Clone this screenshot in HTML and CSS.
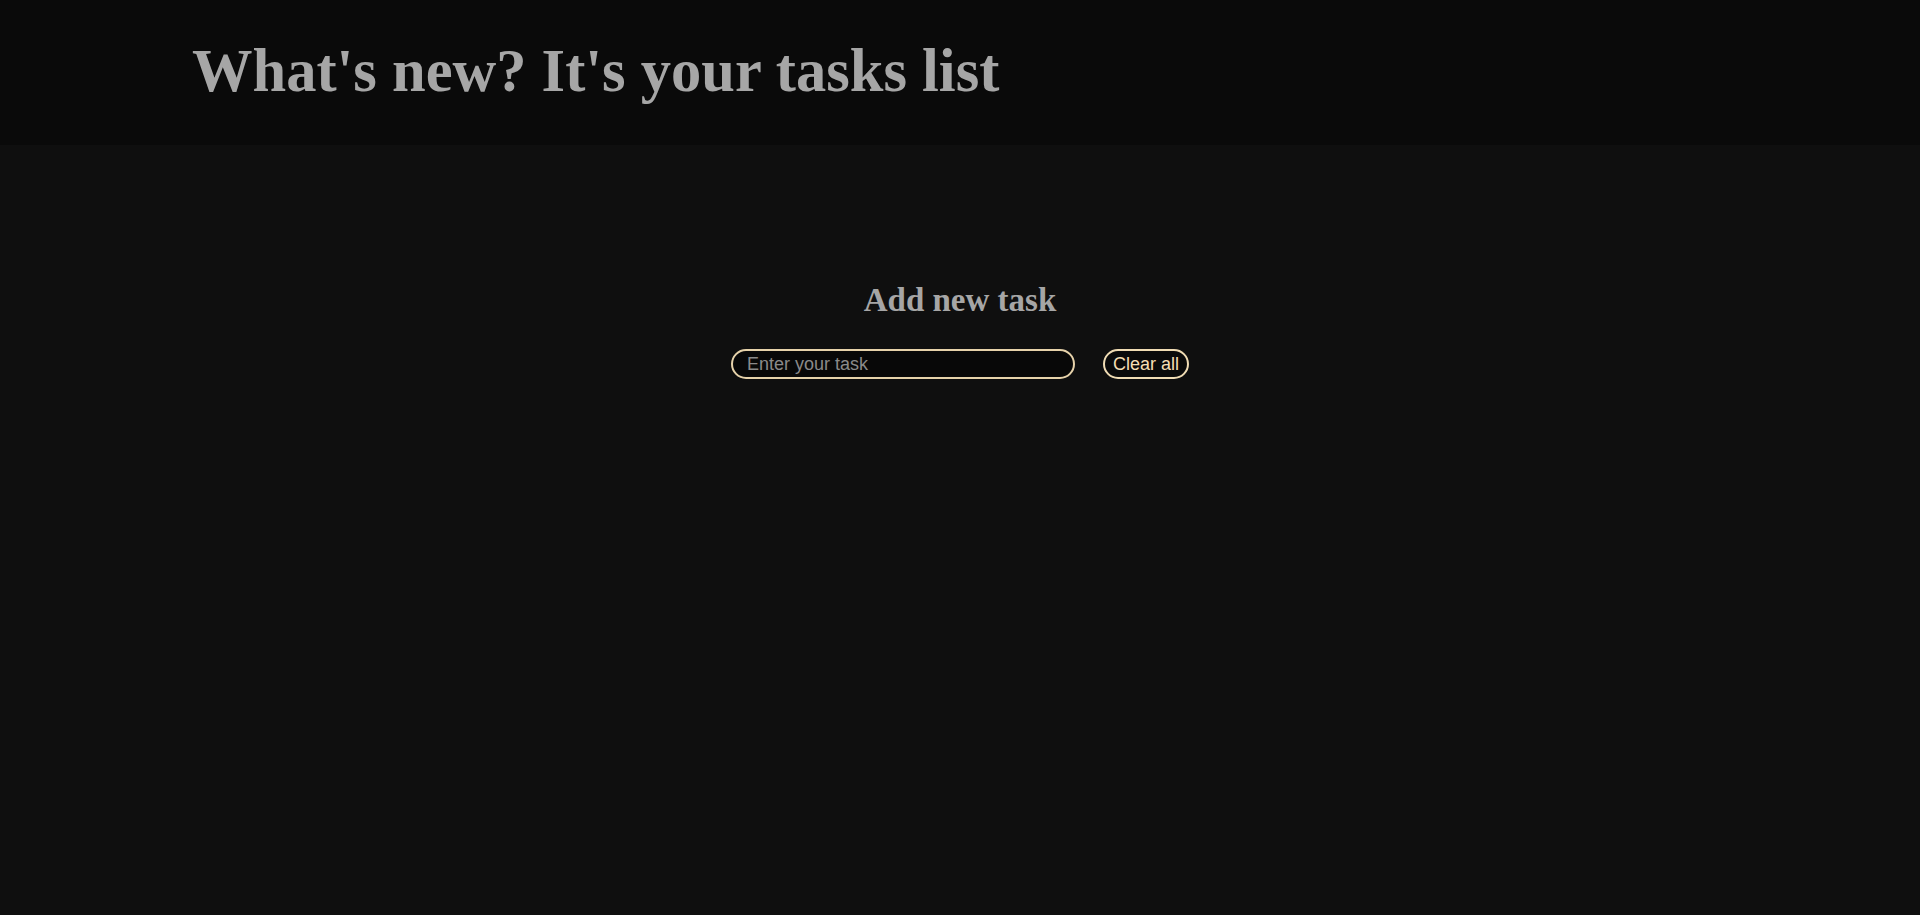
FILE: index.html
```html
<!DOCTYPE html>
<html lang="en">
<head>
<meta charset="utf-8">
<title>Tasks list</title>
<link rel="stylesheet" href="styles.css">
</head>
<body>
<header class="top">
  <h1 class="title">What's new? It's your tasks list</h1>
</header>
<main class="content">
  <h2 class="subtitle">Add new task</h2>
  <div class="form-row">
    <input class="task-input" type="text" placeholder="Enter your task">
    <button class="clear-btn" type="button">Clear all</button>
  </div>
</main>
</body>
</html>
```
FILE: styles.css
```css
html, body {
  margin: 0;
  padding: 0;
  background: #0f0f0f;
  min-height: 100%;
}
body {
  font-family: "Liberation Serif", "Times New Roman", serif;
  color: #a6a6a6;
}
.top {
  background: #0a0a0a;
  padding: 36px 0 39px 192px;
}
.title {
  margin: 0;
  font-size: 60.5px;
  font-weight: bold;
  line-height: normal;
  color: #a6a6a6;
}
.content {
  padding-top: 137px;
  display: flex;
  flex-direction: column;
  align-items: center;
}
.subtitle {
  margin: 0;
  font-size: 33px;
  font-weight: bold;
  line-height: normal;
  color: #a6a6a6;
}
.form-row {
  margin-top: 30px;
  display: flex;
  gap: 28px;
  align-items: center;
}
.task-input {
  box-sizing: border-box;
  width: 344px;
  height: 30px;
  padding: 0 14px;
  border: 2px solid #e6d2aa;
  border-radius: 15px;
  background: #080808;
  color: #e6d2aa;
  font-family: "Liberation Sans", Arial, sans-serif;
  font-size: 18px;
  outline: none;
}
.task-input::placeholder {
  color: #8a8a8a;
}
.clear-btn {
  box-sizing: border-box;
  height: 30px;
  padding: 0 8px;
  border: 2px solid #f0dcb4;
  border-radius: 15px;
  background: #0a0a0a;
  color: #f5deb3;
  font-family: "Liberation Sans", Arial, sans-serif;
  font-size: 18px;
  cursor: pointer;
}
```
